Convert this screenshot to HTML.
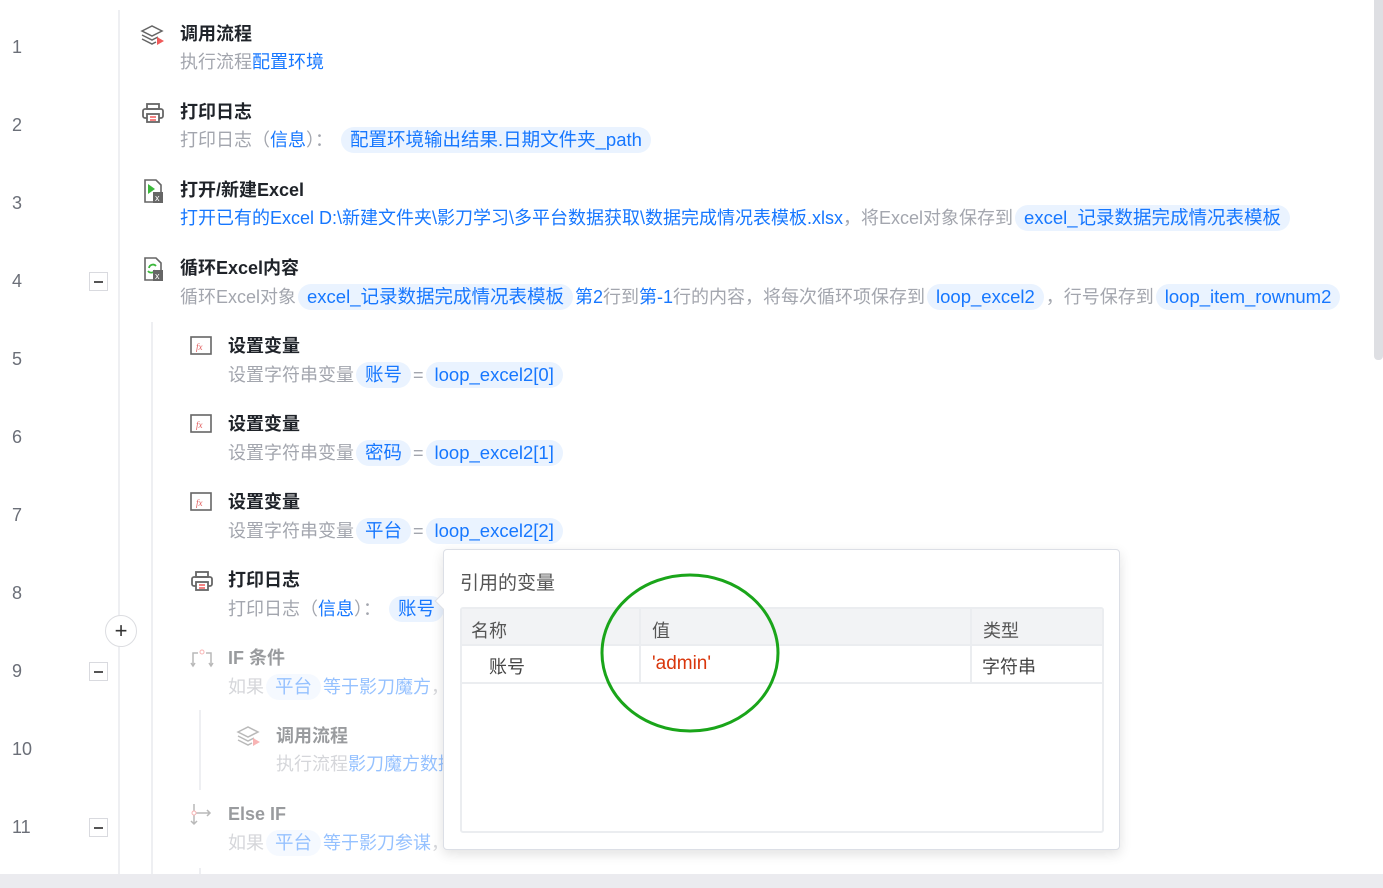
<!DOCTYPE html>
<html><head><meta charset="utf-8"><style>
*{margin:0;padding:0;box-sizing:border-box}
body{width:1383px;height:888px;background:#fff;position:relative;overflow:hidden;font-family:"Liberation Sans","Noto Sans CJK SC",sans-serif}
.a{position:absolute;white-space:nowrap}
.ln{font-size:18px;color:#6b6f78}
.t{font-size:18px;font-weight:bold;color:#1f2329;line-height:24px}
.s{font-size:18px;color:#a3a6ae;line-height:26px}
.b{color:#1677ff}
.p{display:inline-block;background:#eaf3ff;color:#1677ff;border-radius:13px;padding:0 9px;height:26px;line-height:26px;font-size:18.5px;margin:0 2px}
.vl{position:absolute;width:2px;background:#eeeff2}
.mn{position:absolute;width:19px;height:19px;border:1px solid #d9dadf;background:#fff}
.mn:after{content:"";position:absolute;left:4px;top:8px;width:9px;height:1.5px;background:#555}
.f{opacity:.45}
</style></head><body>
<div class="vl" style="left:118px;top:10px;height:878px"></div>
<div class="vl" style="left:151px;top:322px;height:566px"></div>
<div class="vl" style="left:199px;top:710px;height:80px"></div>
<div class="vl" style="left:199px;top:868px;height:20px"></div>

<div class="a ln" style="left:12px;top:37px">1</div>
<div class="a ln" style="left:12px;top:115px">2</div>
<div class="a ln" style="left:12px;top:193px">3</div>
<div class="a ln" style="left:12px;top:271px">4</div>
<div class="a ln" style="left:12px;top:349px">5</div>
<div class="a ln" style="left:12px;top:427px">6</div>
<div class="a ln" style="left:12px;top:505px">7</div>
<div class="a ln" style="left:12px;top:583px">8</div>
<div class="a ln" style="left:12px;top:661px">9</div>
<div class="a ln" style="left:12px;top:739px">10</div>
<div class="a ln" style="left:12px;top:817px">11</div>

<div class="mn" style="left:89px;top:272px"></div>
<div class="mn" style="left:89px;top:662px"></div>
<div class="mn" style="left:89px;top:818px"></div>
<div class="a" style="left:105px;top:615px;width:32px;height:32px;border:1px solid #dcdde1;border-radius:50%;background:#fff;text-align:center;line-height:29px;font-size:22px;color:#333">+</div>

<svg class="a" style="left:140px;top:24px" width="26" height="24" viewBox="0 0 26 24"><g fill="none" stroke="#666" stroke-width="1.5"><path d="M2 7l10-5 10 5-10 5z"/><path d="M2 11l10 5 6-3"/><path d="M2 15l10 5 4-2"/></g><path d="M17 13l7 4-7 4z" fill="#f05a5a"/></svg>
<svg class="a" style="left:141px;top:102px" width="24" height="22" viewBox="0 0 24 22"><g fill="none" stroke="#666" stroke-width="1.8"><rect x="6" y="2" width="12" height="5"/><rect x="2" y="7" width="20" height="9" rx="2"/><rect x="6" y="12" width="12" height="8" fill="#fff"/></g><path d="M9 15h6M9 18h6" stroke="#f05a5a" stroke-width="1.5"/></svg>
<svg class="a" style="left:143px;top:178px" width="22" height="26" viewBox="0 0 22 26"><path d="M2 2h11l5 5v17H2z" fill="none" stroke="#666" stroke-width="1.6"/><path d="M5 6l7 5-7 5z" fill="#3cb83c"/><rect x="10" y="14" width="10" height="11" fill="#666"/><text x="12" y="23" font-size="9" fill="#fff" font-family="Liberation Sans">x</text></svg>
<svg class="a" style="left:143px;top:256px" width="22" height="26" viewBox="0 0 22 26"><path d="M2 2h11l5 5v17H2z" fill="none" stroke="#666" stroke-width="1.6"/><path d="M6 12a4 4 0 0 1 7-2M12 14a4 4 0 0 1-7 1" fill="none" stroke="#3cb83c" stroke-width="1.8"/><rect x="10" y="14" width="10" height="11" fill="#666"/><text x="12" y="23" font-size="9" fill="#fff" font-family="Liberation Sans">x</text></svg>
<svg class="a" style="left:190px;top:336px" width="22" height="20" viewBox="0 0 22 20"><rect x="1" y="1" width="20" height="17" fill="none" stroke="#666" stroke-width="1.6"/><text x="6" y="14" font-size="9" font-style="italic" fill="#e05a5a" font-family="Liberation Serif">fx</text></svg>
<svg class="a" style="left:190px;top:414px" width="22" height="20" viewBox="0 0 22 20"><rect x="1" y="1" width="20" height="17" fill="none" stroke="#666" stroke-width="1.6"/><text x="6" y="14" font-size="9" font-style="italic" fill="#e05a5a" font-family="Liberation Serif">fx</text></svg>
<svg class="a" style="left:190px;top:492px" width="22" height="20" viewBox="0 0 22 20"><rect x="1" y="1" width="20" height="17" fill="none" stroke="#666" stroke-width="1.6"/><text x="6" y="14" font-size="9" font-style="italic" fill="#e05a5a" font-family="Liberation Serif">fx</text></svg>
<svg class="a" style="left:190px;top:570px" width="24" height="22" viewBox="0 0 24 22"><g fill="none" stroke="#666" stroke-width="1.8"><rect x="6" y="2" width="12" height="5"/><rect x="2" y="7" width="20" height="9" rx="2"/><rect x="6" y="12" width="12" height="8" fill="#fff"/></g><path d="M9 15h6M9 18h6" stroke="#f05a5a" stroke-width="1.5"/></svg>
<svg class="a f" style="left:190px;top:648px" width="24" height="22" viewBox="0 0 24 22"><g fill="none" stroke="#666" stroke-width="1.5"><path d="M3 18V5h5M16 5h5v13"/><path d="M1 15l2 3 2-3M19 15l2 3 2-3"/></g><circle cx="12" cy="4" r="2" fill="none" stroke="#f05a5a"/></svg>
<svg class="a f" style="left:236px;top:725px" width="26" height="24" viewBox="0 0 26 24"><g fill="none" stroke="#666" stroke-width="1.5"><path d="M2 7l10-5 10 5-10 5z"/><path d="M2 11l10 5 6-3"/><path d="M2 15l10 5 4-2"/></g><path d="M17 13l7 4-7 4z" fill="#f05a5a"/></svg>
<svg class="a f" style="left:190px;top:802px" width="24" height="24" viewBox="0 0 24 24"><g fill="none" stroke="#666" stroke-width="1.5"><path d="M4 2v20M1 19l3 3 3-3M6 11h14M17 8l3 3-3 3"/></g><circle cx="4" cy="11" r="2" fill="#fff" stroke="#f05a5a"/></svg>

<div class="a t" style="left:180px;top:22px">调用流程</div>
<div class="a s" style="left:180px;top:49px">执行流程<span class="b">配置环境</span></div>
<div class="a t" style="left:180px;top:100px">打印日志</div>
<div class="a s" style="left:180px;top:127px">打印日志（<span class="b">信息</span>）：<span class="p" style="margin-left:8px">配置环境输出结果.日期文件夹_path</span></div>
<div class="a t" style="left:180px;top:178px">打开/新建Excel</div>
<div class="a s" style="left:180px;top:205px"><span class="b">打开已有的Excel D:\新建文件夹\影刀学习\多平台数据获取\数据完成情况表模板.xlsx</span>，将Excel对象保存到<span class="p">excel_记录数据完成情况表模板</span></div>
<div class="a t" style="left:180px;top:256px">循环Excel内容</div>
<div class="a s" style="left:180px;top:284px">循环Excel对象<span class="p">excel_记录数据完成情况表模板</span><span class="b">第2</span>行到<span class="b">第-1</span>行的内容，将每次循环项保存到<span class="p">loop_excel2</span>，行号保存到<span class="p">loop_item_rownum2</span></div>
<div class="a t" style="left:228px;top:334px">设置变量</div>
<div class="a s" style="left:228px;top:362px">设置字符串变量<span class="p">账号</span>=<span class="p">loop_excel2[0]</span></div>
<div class="a t" style="left:228px;top:412px">设置变量</div>
<div class="a s" style="left:228px;top:440px">设置字符串变量<span class="p">密码</span>=<span class="p">loop_excel2[1]</span></div>
<div class="a t" style="left:228px;top:490px">设置变量</div>
<div class="a s" style="left:228px;top:518px">设置字符串变量<span class="p">平台</span>=<span class="p">loop_excel2[2]</span></div>
<div class="a t" style="left:228px;top:568px">打印日志</div>
<div class="a s" style="left:228px;top:596px">打印日志（<span class="b">信息</span>）：<span class="p" style="margin-left:8px">账号</span></div>
<div class="a t f" style="left:228px;top:646px">IF 条件</div>
<div class="a s f" style="left:228px;top:674px">如果<span class="p">平台</span><span class="b">等于影刀魔方</span>，</div>
<div class="a t f" style="left:276px;top:724px">调用流程</div>
<div class="a s f" style="left:276px;top:751px">执行流程<span class="b">影刀魔方数据</span></div>
<div class="a t f" style="left:228px;top:802px">Else IF</div>
<div class="a s f" style="left:228px;top:830px">如果<span class="p">平台</span><span class="b">等于影刀参谋</span>，</div>

<div class="a" style="left:1374px;top:0;width:9px;height:360px;background:#dedfe3;border-radius:0 0 4px 4px"></div>
<div class="a" style="left:0;top:874px;width:1383px;height:14px;background:#ebebef"></div>

<div class="a" style="left:443px;top:549px;width:677px;height:301px;background:#fff;border:1px solid #dcdfe6;border-radius:4px;box-shadow:0 4px 12px rgba(0,0,0,.12)">
  <div class="a" style="left:-7px;top:45px;width:12px;height:12px;background:#fff;border-left:1px solid #dcdfe6;border-bottom:1px solid #dcdfe6;transform:rotate(45deg)"></div>
  <div class="a" style="left:16px;top:18px;font-size:19px;color:#555">引用的变量</div>
  <div class="a" style="left:16px;top:57px;width:644px;height:226px;border:2px solid #ebedf0;border-radius:3px;overflow:hidden">
    <div class="a" style="left:0;top:0;width:640px;height:37px;background:#f2f3f5;border-bottom:2px solid #ebedf0"></div>
    <div class="a" style="left:0;top:73px;width:640px;height:2px;background:#ebedf0"></div>
    <div class="a" style="left:177px;top:0;width:2px;height:73px;background:#ebedf0"></div>
    <div class="a" style="left:508px;top:0;width:2px;height:73px;background:#ebedf0"></div>
    <div class="a" style="left:9px;top:8px;font-size:18px;color:#555">名称</div>
    <div class="a" style="left:190px;top:8px;font-size:18px;color:#555">值</div>
    <div class="a" style="left:521px;top:8px;font-size:18px;color:#555">类型</div>
    <div class="a" style="left:27px;top:44px;font-size:18px;color:#444">账号</div>
    <div class="a" style="left:190px;top:44px;font-size:19px;color:#d9360b">'admin'</div>
    <div class="a" style="left:520px;top:44px;font-size:18px;color:#444">字符串</div>
  </div>
</div>
<svg class="a" style="left:0;top:0" width="1383" height="888"><ellipse cx="690" cy="653" rx="88" ry="78" fill="none" stroke="#1aa51a" stroke-width="3"/></svg>
</body></html>
